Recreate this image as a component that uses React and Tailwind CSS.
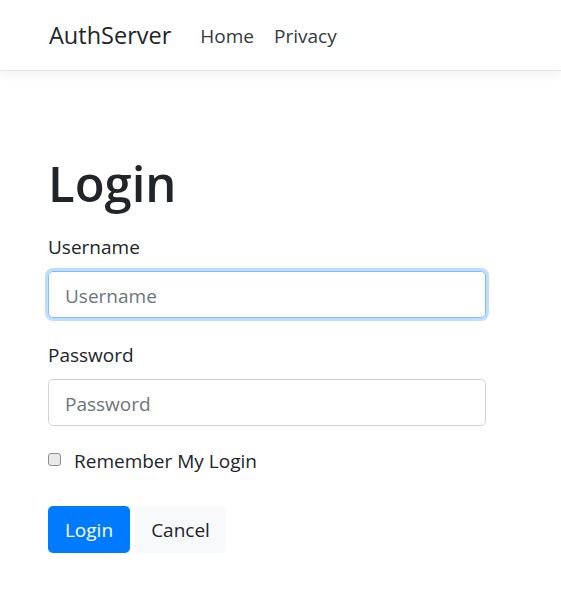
export default function App() {
  return (
    <div className="min-h-screen bg-white text-[#212529] font-['Open_Sans',sans-serif]">
      {/* Navbar */}
      <header className="h-[71px] border-b border-[#e5e5e5] shadow-[0_4px_12px_rgba(0,0,0,0.05)] bg-white">
        <nav className="h-[70px] flex items-center pl-[49px] pr-[48px] pt-[2px]">
          <a className="text-[23.5px] text-[#212529] mr-[29px] leading-none">AuthServer</a>
          <ul className="flex items-center gap-[20px] text-[19px] text-[#343a40] leading-none">
            <li>Home</li>
            <li>Privacy</li>
          </ul>
        </nav>
      </header>

      <main className="px-[48px] pt-[83px]">
        <h1 className="text-[49px] font-semibold leading-[59px] mb-[20px]">Login</h1>
        <form className="w-[438px]">
          <div className="mb-[23px]">
            <label className="block text-[19px] mb-[10px] pt-[1px] leading-[27px]">Username</label>
            <input
              type="text"
              placeholder="Username"
              className="w-full h-[47px] px-[16px] pt-[2px] text-[19px] rounded-[5px] border border-[#80bdff] outline-none shadow-[0_0_0_3px_rgba(0,123,255,0.25)] placeholder:text-[#6c757d]"
            />
          </div>
          <div>
            <label className="block text-[19px] mb-[10px] pt-[1px] leading-[27px]">Password</label>
            <input
              type="password"
              placeholder="Password"
              className="w-full h-[47px] px-[16px] pt-[2px] text-[19px] rounded-[5px] border border-[#ced4da] outline-none placeholder:text-[#6c757d]"
            />
          </div>
          <div className="flex items-start mt-[21px] mb-[32px] h-[27px]">
            <span className="w-[13px] h-[13px] rounded-[3px] border border-[#8f8f8f] bg-[#e9e9e9] mt-[6px] mr-[13px]" />
            <span className="text-[19px] leading-[27px] pt-[1px]">Remember My Login</span>
          </div>
          <div className="flex gap-[5px]">
            <button type="button" className="h-[47px] w-[82px] pt-[2px] rounded-[5px] bg-[#007bff] text-white text-[19px]">Login</button>
            <button type="button" className="h-[47px] w-[91px] pt-[2px] rounded-[5px] bg-[#f8f9fa] text-[#212529] text-[19px]">Cancel</button>
          </div>
        </form>
      </main>
    </div>
  );
}
